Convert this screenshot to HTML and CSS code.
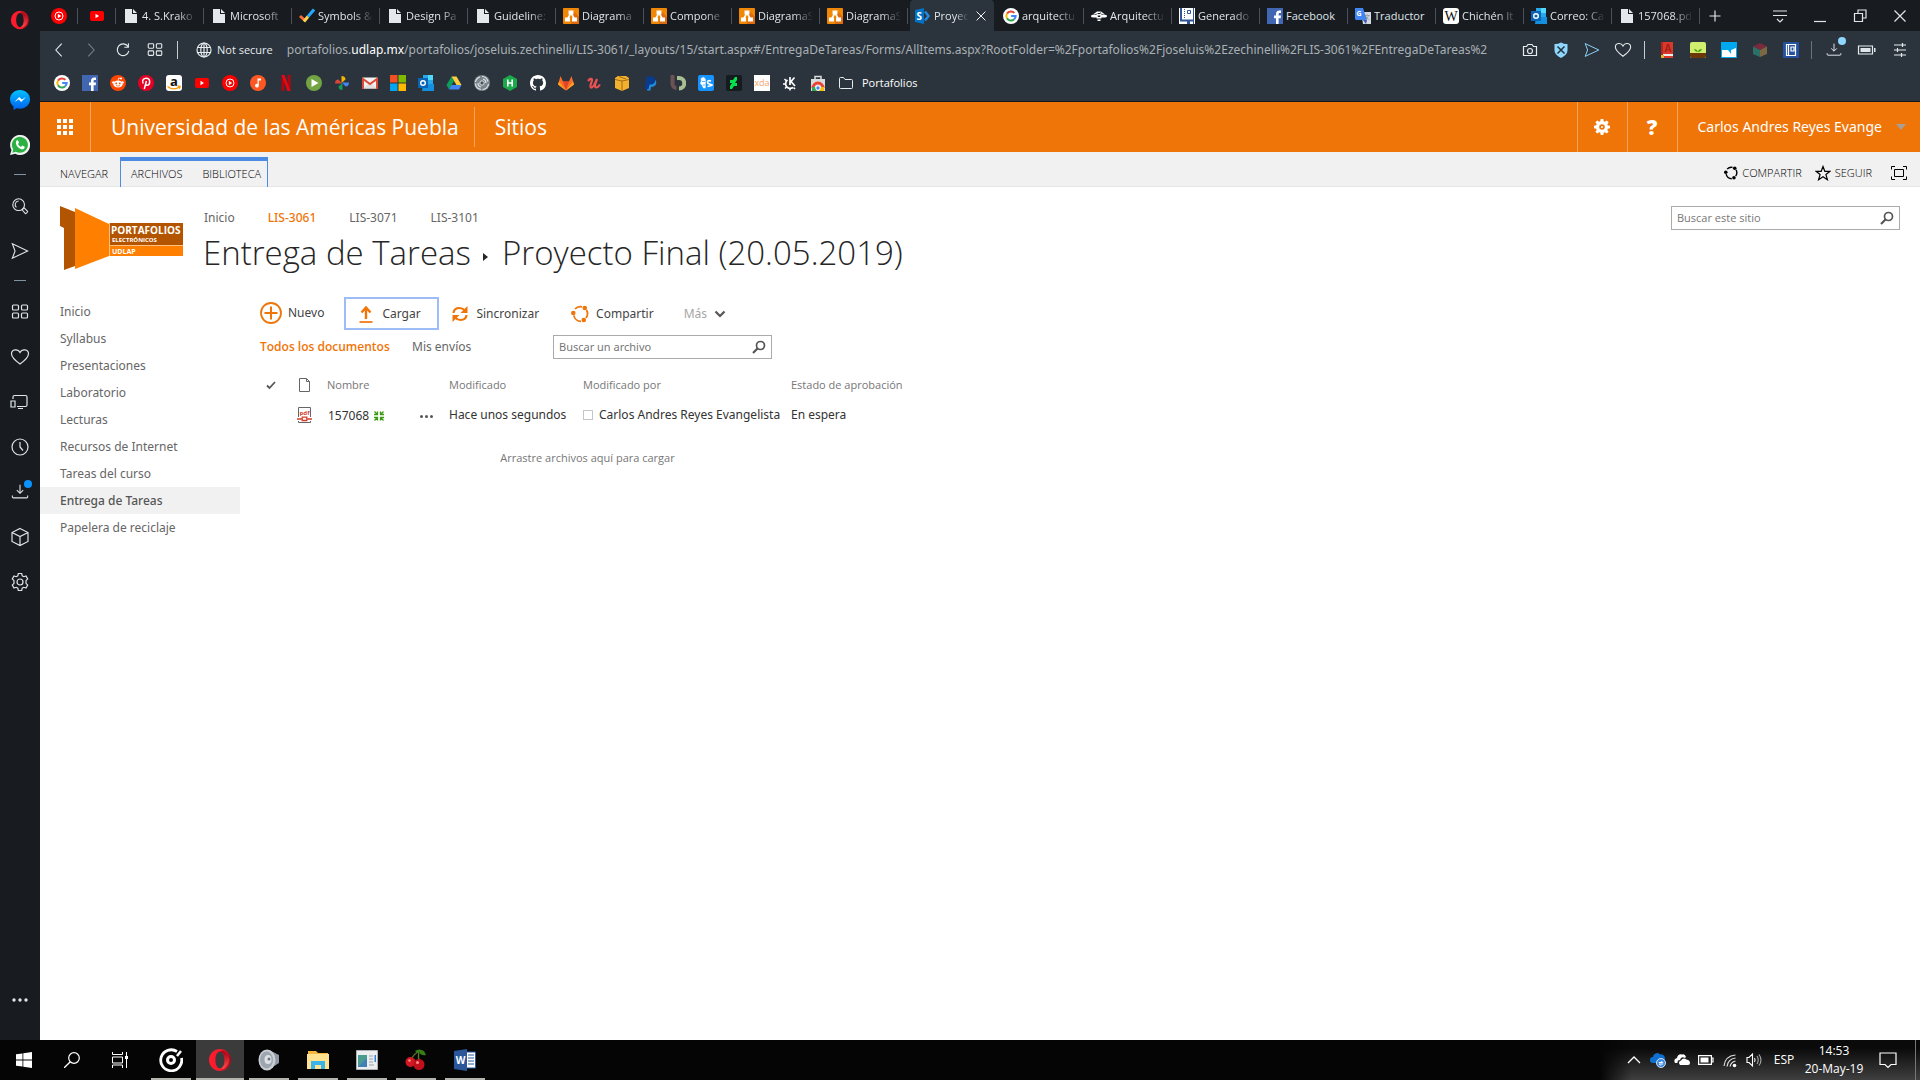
FILE: index.html
```html
<!DOCTYPE html>
<html lang="es">
<head>
<meta charset="utf-8">
<title>Entrega de Tareas - Proyecto Final (20.05.2019)</title>
<link rel="stylesheet" href="styles.css">
</head>
<body>
<svg class="gradients" aria-hidden="true">
  <defs>
    <linearGradient id="opera-ring" x1="0" y1="0" x2="1" y2="0"><stop offset="0" stop-color="#ff1b2d"/><stop offset=".5" stop-color="#f51b2c"/><stop offset="1" stop-color="#a20b1c"/></linearGradient>
    <linearGradient id="opera-side" x1="0" y1="0" x2="0" y2="1"><stop offset="0" stop-color="#a70014"/><stop offset="1" stop-color="#ff4b4b"/></linearGradient>
    <linearGradient id="msg-fill" x1="0" y1="0" x2="0" y2="1"><stop offset="0" stop-color="#00c0ff"/><stop offset="1" stop-color="#0060f0"/></linearGradient>
  </defs>
</svg>
<svg class="sprite" aria-hidden="true">
  <symbol id="google" viewBox="0 0 16 16"><circle cx="8" cy="8" r="8" fill="#fff"/><g fill="none" stroke-width="2"><path d="M11.4 4.9A4.7 4.7 0 0 0 4 5.6" stroke="#ea4335"/><path d="M4 5.6a4.7 4.7 0 0 0 0 4.8" stroke="#fbbc05"/><path d="M4 10.4a4.7 4.7 0 0 0 7.2.8" stroke="#34a853"/><path d="M11.2 11.2A4.6 4.6 0 0 0 12.7 8H8.2" stroke="#4285f4"/></g></symbol>
  <symbol id="facebook" viewBox="0 0 16 16"><path fill="#4267b2" d="M0 0h16v16H0z"/><path fill="#fff" d="M9 16v-5.800H7V7.600h2V6c0-2.200 1.200-3.400 3.200-3.400h1.800V5h-1.300c-.9 0-1.100.4-1.100 1.200v1.400H14l-.3 2.600h-2.100V16z"/></symbol>
  <symbol id="youtube" viewBox="0 0 16 16"><rect x="1" y="3" width="14" height="10" rx="2" fill="#f00"/><path fill="#fff" d="M6.500 5.800 10 8l-3.500 2.200z"/></symbol>
  <symbol id="ytmusic" viewBox="0 0 16 16"><circle cx="8" cy="8" r="8" fill="#f00"/><circle cx="8" cy="8" r="4" fill="none" stroke="#fff"/><path fill="#fff" d="M6.800 5.800 10.200 8l-3.400 2.200z"/></symbol>
  <symbol id="file" viewBox="0 0 16 16"><path fill="#e4e8ea" d="M2 1h7v5h5v9H2z"/><path fill="#e4e8ea" d="m10 1 4 4h-4z"/></symbol>
  <symbol id="tick" viewBox="0 0 16 16"><path fill="none" stroke="#ff6a3d" stroke-width="3" d="m1 8 5 4.500"/><path fill="none" stroke="#ffd34d" stroke-width="3" d="m5 13.500 4-5"/><path fill="none" stroke="#24a8ff" stroke-width="3" d="m9 8.500 6-7"/></symbol>
  <symbol id="diagram" viewBox="0 0 16 16"><rect width="16" height="16" rx="1" fill="#f08705"/><path fill="#df6c0c" d="M10 3l6 6v7H8z"/><path d="M8 5 4.500 11M8 5l3.500 6" stroke="#fff" stroke-width="1.500"/><path fill="#fff" d="M5.500 2.500h5v4h-5zM2 9.500h5v4H2zM9 9.500h5v4H9z"/></symbol>
  <symbol id="sharepoint" viewBox="0 0 16 16"><path fill="#0072c6" d="M0 2 9 0v16l-9-2z"/><path fill="none" stroke="#1e8ae0" stroke-width="2.500" d="m10 3.500 3.500 4.500L10 12.500"/><text x="1.500" y="12" class="glyph-bold" fill="#fff" font-size="10">S</text></symbol>
  <symbol id="bee" viewBox="0 0 16 16"><g fill="#fff"><ellipse cx="3.500" cy="8" rx="3.500" ry="1.600"/><ellipse cx="12.500" cy="8" rx="3.500" ry="1.600"/><path d="m2 6.500 4-3 1 2zM14 6.500l-4-3-1 2zM6 3.500h4V5H6zM5.500 6h5v1.500h-5zM5.500 9h5v1.500h-5zM6.500 11.500h3V13h-3z"/></g></symbol>
  <symbol id="notebook" viewBox="0 0 16 16"><path fill="#fff" d="M0 0h16v16H0z"/><path fill="none" stroke="#2f5597" stroke-width="2" d="M2 0v12.500h13"/><path fill="none" stroke="#2f5597" stroke-dasharray="1 1" d="M5.500 1v10"/><path fill="none" stroke="#2f5597" d="M14.500 0v16M8.500 2.500h3v3h-3z"/><path fill="#2f5597" d="M8 12h3v4H8z"/></symbol>
  <symbol id="translate" viewBox="0 0 16 16"><path fill="#d5d9df" d="M6 4h10v12H8z"/><path fill="#4285f4" d="M0 0h8l4 12H1L0 11z"/><path fill="#3a5bb8" d="m8 12 3 4 1-4z"/><text x="1.500" y="8" class="glyph-bold" fill="#fff" font-size="7">G</text><text x="9" y="11" fill="#7b828d" font-size="6" font-family="Noto Sans CJK SC, sans-serif">文</text></symbol>
  <symbol id="wikipedia" viewBox="0 0 16 16"><rect width="16" height="16" rx="3" fill="#fff"/><text x="8" y="13" text-anchor="middle" font-size="14" font-family="Liberation Serif, serif" fill="#111">W</text></symbol>
  <symbol id="outlook" viewBox="0 0 16 16"><path fill="#28a8ea" d="M5 0h10v10H5z"/><path fill="#50d9ff" d="M10 0h5v5h-5z"/><path fill="#1490df" d="M5 9h11v7H4z"/><path fill="#0a64b5" d="M0 3h10v10H0z"/><circle cx="5" cy="8" r="2.300" fill="none" stroke="#fff" stroke-width="1.400"/></symbol>
  <symbol id="reddit" viewBox="0 0 16 16"><circle cx="8" cy="8" r="8" fill="#ff4500"/><ellipse cx="8" cy="9" rx="4.800" ry="3.500" fill="#fff"/><circle cx="3.400" cy="7.400" r="1.200" fill="#fff"/><circle cx="12.600" cy="7.400" r="1.200" fill="#fff"/><circle cx="11" cy="3.500" r="1" fill="#fff"/><path d="m8 5.500.7-2.500 2 .5" fill="none" stroke="#fff" stroke-width=".8"/><circle cx="6.200" cy="8.400" r=".9" fill="#ff4500"/><circle cx="9.800" cy="8.400" r=".9" fill="#ff4500"/><path d="M6 10.500q2 1.300 4 0" fill="none" stroke="#ff4500" stroke-width=".7"/></symbol>
  <symbol id="pinterest" viewBox="0 0 16 16"><circle cx="8" cy="8" r="8" fill="#e60023"/><path d="M5.200 8.600C3.500 5.500 5.500 3.200 8.300 3.200c4.700 0 4 7.100.6 7.100-1 0-1.500-.8-1.500-.8M8.400 6 6.300 14" fill="none" stroke="#fff" stroke-width="1.500"/></symbol>
  <symbol id="amazon" viewBox="0 0 16 16"><rect width="16" height="16" rx="3" fill="#fff"/><text x="8" y="10.500" text-anchor="middle" class="glyph-bold" font-size="13" fill="#111">a</text><path d="M1.500 11.500q6 4.500 12 .5M11.500 11l2.600.4-.7 2.400" fill="none" stroke="#f90" stroke-width="1.300"/></symbol>
  <symbol id="music-note" viewBox="0 0 16 16"><circle cx="8" cy="8" r="8" fill="#ff5722"/><path fill="#fff" d="M7.500 3.500H11v2H8.800v5.200a1.900 1.900 0 1 1-1.300-1.800z"/></symbol>
  <symbol id="netflix" viewBox="0 0 16 16"><path fill="#b1060f" d="M3.500 0h3v16l-3 .300zM9.500 0h3v16.300l-3-.300z"/><path fill="#e50914" d="M3.500 0h3l6 16.300-3-.300z"/></symbol>
  <symbol id="play-green" viewBox="0 0 16 16"><circle cx="8" cy="8" r="8" fill="#73a443"/><path fill="#fff" d="m5.500 4 7 4-7 4z"/></symbol>
  <symbol id="photos" viewBox="0 0 16 16"><path fill="#f4b400" d="M7.500 8V1q4 0 4 3.500z"/><path fill="#4285f4" d="M8 7.500h7q0 4-3.500 4z"/><path fill="#0f9d58" d="M8.500 8v7q-4 0-4-3.500z"/><path fill="#db4437" d="M8 8.500H1q0-4 3.500-4z"/></symbol>
  <symbol id="gmail" viewBox="0 0 16 16"><path fill="#f2f2f2" d="M1 2.500h14v11H1z"/><path fill="#e0e0e0" d="m1 13.500 7-6 7 6z"/><path d="M1 14V4l7 5 7-5v10" fill="none" stroke="#dd4b39" stroke-width="2"/></symbol>
  <symbol id="microsoft" viewBox="0 0 16 16"><path fill="#f25022" d="M0 0h7.500v7.500H0z"/><path fill="#7fba00" d="M8.500 0H16v7.500H8.500z"/><path fill="#00a4ef" d="M0 8.500h7.500V16H0z"/><path fill="#ffb900" d="M8.500 8.500H16V16H8.500z"/></symbol>
  <symbol id="drive" viewBox="0 0 16 16"><path fill="#0f9d58" d="M5.500 1.500 8 6l-5 8.500L.500 10z"/><path fill="#ffcd40" d="M5.500 1.500h5l5 8.500h-5z"/><path fill="#4285f4" d="M5.500 10h10L13 14.500H3z"/></symbol>
  <symbol id="swirl" viewBox="0 0 16 16"><circle cx="8" cy="8" r="8" fill="#79838a"/><path d="M8 1.500a6.500 6.500 0 0 1 6 5M14.500 9a6.500 6.500 0 0 1-6 5.500M7 14.500a6.500 6.500 0 0 1-5.500-6M1.500 7A6.500 6.500 0 0 1 6 2M9 4a4 4 0 0 1 3 4M7 12a4 4 0 0 1-3-4" fill="none" stroke="#dfe3e5" stroke-width="1.200"/><circle cx="8" cy="8" r="2.200" fill="#4a545a" stroke="#dfe3e5"/></symbol>
  <symbol id="hackerrank" viewBox="0 0 16 16"><path fill="#1ba94c" d="m8 0 7 4v8l-7 4-7-4V4z"/><path d="M5.800 4.500v7M10.200 4.500v7M5.800 8h4.400" stroke="#fff" stroke-width="1.600"/></symbol>
  <symbol id="github" viewBox="0 0 16 16"><path fill="#fff" d="M8 0C3.580 0 0 3.580 0 8c0 3.540 2.290 6.530 5.470 7.590.4.070.55-.17.55-.38 0-.19-.01-.82-.01-1.490-2.010.37-2.530-.49-2.690-.94-.09-.23-.48-.94-.82-1.130-.28-.15-.68-.52-.01-.53.63-.01 1.080.58 1.230.82.72 1.210 1.870.87 2.330.66.07-.52.28-.87.51-1.070-1.780-.2-3.640-.89-3.640-3.950 0-.87.310-1.590.82-2.150-.08-.2-.36-1.020.08-2.120 0 0 .67-.21 2.200.82.64-.18 1.320-.27 2-.27s1.360.09 2 .27c1.530-1.040 2.200-.82 2.200-.82.44 1.100.16 1.920.08 2.120.51.56.82 1.270.82 2.150 0 3.070-1.870 3.750-3.650 3.950.29.25.54.73.54 1.480 0 1.070-.01 1.930-.01 2.200 0 .21.15.46.55.38A8 8 0 0 0 16 8c0-4.420-3.580-8-8-8z"/></symbol>
  <symbol id="gitlab" viewBox="0 0 16 16"><path fill="#fc6d26" d="M0 9.500 2.500 1 5 6.500h6L13.500 1 16 9.500l-8 6z"/><path fill="#e24329" d="m5 6.500 3 9 3-9z"/><path fill="#fca326" d="M0 9.500 1 6.500 8 15.500zM16 9.500l-1-3-7 9z"/></symbol>
  <symbol id="udemy" viewBox="0 0 16 16"><path d="M2 6q3-3.500 4-1.500C6.500 6 3 11.500 5 12.500c2 .8 4.500-5 6-8.500-1.500 4-3 8-1 8.500 1.500.2 3-1.500 4-3" fill="none" stroke="#ec5252" stroke-width="2.200"/></symbol>
  <symbol id="aws" viewBox="0 0 16 16"><path fill="#f2b02f" d="m1 3 3-2h8l3 2v10l-7 3-7-3z"/><path d="M1 4.500 8 6l7-1.500M8 6v10M5 1.500l7 2.500" fill="none" stroke="#9a6410" stroke-width=".9"/></symbol>
  <symbol id="paypal" viewBox="0 0 16 16"><path fill="#1f8ddd" d="M7 5h6.500c2 3 0 7-4 7H9l-.6 3.500H5z"/><path fill="#0a3a8c" d="M4.500 1.500h6C15 2 14 9.500 9 9.500H7.500l-1 4.500H2.500z"/></symbol>
  <symbol id="brackets" viewBox="0 0 16 16"><path d="M2.500 0v9a4 4 0 0 0 4 4" fill="none" stroke="#6b5257" stroke-width="4"/><path d="M7 3h2a5 5 0 0 1 0 10.500" fill="none" stroke="#a9bf93" stroke-width="4"/></symbol>
  <symbol id="blue-brain" viewBox="0 0 16 16"><rect width="16" height="16" rx="2" fill="#1593ff"/><path d="M7 3a2.500 2.500 0 0 0-4 3 2.500 2.500 0 0 0 1 4.500A2.500 2.500 0 0 0 8 13V4zM4 6.500h3M5 10h2" fill="#fff" stroke="#1593ff" stroke-width=".7"/><path d="M13 6q-3.500-1-3.500 1T13 9.500t-3.500 2" fill="none" stroke="#fff" stroke-width="1.600"/></symbol>
  <symbol id="deviant" viewBox="0 0 16 16"><rect width="16" height="16" rx="2" fill="#151b1e"/><path fill="#05e04b" d="M11 2v3L9 8h2v3H8l-2 3H4v-3l2-3H4V5h3l2-3z"/></symbol>
  <symbol id="xda" viewBox="0 0 16 16"><path fill="#fff" d="M0 0h16v16H0z"/><text x="8" y="11" text-anchor="middle" font-size="9" font-family="Open Sans, sans-serif" fill="#f3a56e">xda</text></symbol>
  <symbol id="kde" viewBox="0 0 16 16"><path d="M8 2v8M12.500 2.500 9 6.500l4 4.500" fill="none" stroke="#fff" stroke-width="1.700"/><path d="M5.500 5a4.200 4.200 0 0 0 5.500 7.500" fill="none" stroke="#fff" stroke-width="1.700"/><path d="m2.500 4 2 2M1 9h3M3 13.500l1.800-1.800M8 15.500V13M13 14l-1.500-1.500" stroke="#fff" stroke-width="1.500"/></symbol>
  <symbol id="webstore" viewBox="0 0 16 16"><path fill="#d9dcdd" d="M1 4h14v12H1z"/><path d="M5 4V1.500h6V4" fill="none" stroke="#d9dcdd" stroke-width="1.500"/><path d="M3 13a5 5 0 0 1 10 0" fill="none" stroke="#ea4335" stroke-width="3"/><path fill="#34a853" d="M2 12h3l2 4H2z"/><path fill="#fbbc05" d="M11 12h3v4H9z"/><circle cx="8" cy="13" r="2.200" fill="#4285f4" stroke="#fff"/></symbol>
  <symbol id="folder" viewBox="0 0 16 16"><path d="M1.500 3.500q0-1 1-1h3l1.500 2h6.500q1 0 1 1v7q0 1-1 1h-11q-1 0-1-1z" fill="none" stroke="#e6ebee"/></symbol>
  <symbol id="opera" viewBox="0 0 24 24"><path fill="url(#opera-ring)" fill-rule="evenodd" d="M12 1a11 11 0 1 0 0 22 11 11 0 0 0 0-22zm0 2.500c2.800 0 4.600 3.800 4.600 8.500s-1.800 8.500-4.600 8.500S7.400 16.700 7.400 12 9.200 3.500 12 3.500z"/><path fill="url(#opera-side)" d="M12 3.500c2-.8 4-.5 6 1.500 5 5 4 10 0 14-2 1.800-4 2.300-6 1.500 2.800 0 4.600-3.800 4.600-8.500S14.800 3.500 12 3.500z"/></symbol>
  <symbol id="messenger" viewBox="0 0 20 20"><path fill="url(#msg-fill)" d="M10 0C4.400 0 0 4 0 9.300c0 3 1.400 5.500 3.500 7.200V20l3.200-1.800c1 .300 2.100.500 3.300.500 5.600 0 10-4.100 10-9.400S15.600 0 10 0z"/><path fill="#fff" d="m4.500 12 4.700-5 2.600 2.500L16 7l-4.800 5-2.500-2.500z"/></symbol>
  <symbol id="whatsapp" viewBox="0 0 20 20"><path fill="#f1f5f1" d="m0 20 1.500-5A10 10 0 1 1 5.300 18.700z"/><path fill="#2bb041" d="m2.300 17.800 1-3.400a8 8 0 1 1 2.600 2.400z"/><path fill="#fff" d="M6.500 5.500 8 5.300l1 2.400-1 1.200q1 2 3 3l1.200-1.300 2.500 1.200c0 2-1.500 2.700-3 2.500C8 13.500 4.500 9 6.500 5.500z"/></symbol>
  <symbol id="lens-side" viewBox="0 0 20 20"><g class="line"><circle cx="8.500" cy="8.500" r="6.500"/><path d="M8.500 4.500a4 4 0 0 0-2.500 7M13.500 13l1-1 4 4q-.5 2-2.500 2.500l-3.500-4z"/></g></symbol>
  <symbol id="send" viewBox="0 0 20 20"><path class="line" d="m1.500 2 17 8-17 8 3-8z"/></symbol>
  <symbol id="tiles" viewBox="0 0 20 20"><g class="line"><rect x="2.500" y="3" width="6" height="5" rx="1"/><rect x="11.500" y="3" width="6" height="5" rx="1"/><rect x="2.500" y="11" width="6" height="5" rx="1"/><rect x="11.500" y="11" width="6" height="5" rx="1"/></g></symbol>
  <symbol id="heart" viewBox="0 0 20 20"><path class="line" d="M10 17Q1.500 11 1.500 6.800C1.500 2 8 1.500 10 5.500 12 1.500 18.500 2 18.500 6.800 18.500 11 10 17 10 17z"/></symbol>
  <symbol id="devices" viewBox="0 0 20 20"><path class="line" d="M3 7V5q0-1.500 1.500-1.500h11Q17 3.500 17 5v8q0 1.500-1.500 1.500H7M1 9h4v6H1zM8 16.500h5"/></symbol>
  <symbol id="clock" viewBox="0 0 20 20"><g class="line"><circle cx="10" cy="10" r="8"/><path d="M10 5v5l3 3.500"/></g></symbol>
  <symbol id="download" viewBox="0 0 20 20"><path class="line" d="M10 2v9M6.500 8l3.500 3.500L13.500 8M1.500 14v1.500q0 1 1 1h15q1 0 1-1V14"/></symbol>
  <symbol id="cube" viewBox="0 0 20 20"><path class="line" d="m10 1.500 8 4v9l-8 4-8-4v-9zM2 5.500l8 4 8-4M10 9.500v9"/></symbol>
  <symbol id="gear-side" viewBox="0 0 20 20"><g class="line"><path d="M8.300 1.500h3.400l.5 2.300 1.600.9 2.200-.7 1.700 3L16 8.700v2.600l1.700 1.700-1.700 3-2.200-.7-1.600.9-.5 2.300H8.300l-.5-2.300-1.600-.9-2.200.7-1.700-3L4 11.300V8.700L2.300 7 4 4l2.200.7 1.600-.9z"/><circle cx="10" cy="10" r="3"/></g></symbol>
  <symbol id="dots" viewBox="0 0 20 20"><g fill="#dfe5e8"><circle cx="4" cy="10" r="1.700"/><circle cx="10" cy="10" r="1.700"/><circle cx="16" cy="10" r="1.700"/></g></symbol>
  <symbol id="back" viewBox="0 0 20 20"><path class="line" d="M13 3 6.500 10l6.500 7"/></symbol>
  <symbol id="forward" viewBox="0 0 20 20"><path class="line" d="m7 3 6.500 7L7 17"/></symbol>
  <symbol id="reload" viewBox="0 0 20 20"><path class="line" d="M15.500 6A6.500 6.500 0 1 0 16.500 11M16 2.500V7h-4.500"/></symbol>
  <symbol id="globe" viewBox="0 0 20 20"><g class="line"><circle cx="10" cy="10" r="7"/><ellipse cx="10" cy="10" rx="3.200" ry="7"/><path d="M3.500 7.500h13M3.500 12.500h13M10 3v14"/></g></symbol>
  <symbol id="camera" viewBox="0 0 20 20"><g class="line"><path d="M3.500 6.500h3l1.500-2h4l1.500 2h3v9h-13z"/><circle cx="10" cy="11" r="2.500"/></g></symbol>
  <symbol id="shield" viewBox="0 0 20 20"><path fill="#8fd6ff" d="M10 2.500q4 2 6.500 1.500v6.500q0 4-6.500 7.500-6.500-3.500-6.500-7.500V4Q6 4.500 10 2.500z"/><path d="m6.500 6.500 7 7m0-7-7 7" stroke="#23303a" stroke-width="1.500"/></symbol>
  <symbol id="book" viewBox="0 0 16 16"><path fill="#d9392b" d="M2 0h12v16H2z"/><path fill="#eee" d="M3 12h11v2H3z"/><path fill="#b5271d" d="M2 0h2v13H2z"/><path fill="#e5b32b" d="M2 13h3v3H2z"/><text x="9" y="10" text-anchor="middle" class="glyph-bold" font-size="10" fill="#a52016">A</text></symbol>
  <symbol id="sprout" viewBox="0 0 16 16"><rect width="16" height="16" rx="2" fill="#d2ee6f"/><path fill="#6b3708" d="M0 11h16v3q0 2-2 2H2q-2 0-2-2z"/><path fill="#4f9d16" d="M8 10Q7 7 4 7q1 3 4 3 0-3 4-3-1 3-4 3z"/></symbol>
  <symbol id="wave" viewBox="0 0 16 16"><path fill="#00a8f0" d="M0 0h16v16H0z"/><path fill="#fff" d="M1 8h6l3 4V8l5-2v9H1z"/></symbol>
  <symbol id="rgb-cube" viewBox="0 0 16 16"><path fill="#7b2a3b" d="m8 1 7 3.500L8 8 1 4.500z"/><path fill="#2d7068" d="m1 4.500 7 3.500v7L1 12z"/><path fill="#7a6743" d="M15 4.500 8 8v7l7-3z"/></symbol>
  <symbol id="journal" viewBox="0 0 16 16"><rect width="16" height="16" rx="1" fill="#2552a0"/><path d="M3.500 2.500h9v11h-9zM5.500 2v11M8 5h3v4H8z" fill="none" stroke="#fff" stroke-width="1.200"/></symbol>
  <symbol id="battery" viewBox="0 0 20 20"><path class="line" d="M1.500 6h14v8h-14z"/><path fill="#dfe5e8" d="M3.500 8h10v4h-10zM17 8h1.500v4H17z"/></symbol>
  <symbol id="sliders" viewBox="0 0 20 20"><path class="line" d="M4 5h12M4 10h12M4 15h12M12.500 3v4M7.500 8v4M11.500 13v4"/></symbol>
  <symbol id="tab-menu" viewBox="0 0 20 20"><path class="line" d="M3 5h14M3 9.500h14M7 13l3 3 3-3"/></symbol>
  <symbol id="plus" viewBox="0 0 20 20"><path class="line" d="M10 4.500v11M4.500 10h11"/></symbol>
  <symbol id="minus" viewBox="0 0 20 20"><path class="line" d="M4 15.500h12"/></symbol>
  <symbol id="restore" viewBox="0 0 20 20"><path class="line" d="M4.500 7.500h8v8h-8zM8 7V4h8v8h-3"/></symbol>
  <symbol id="close" viewBox="0 0 20 20"><path class="line" d="m4.500 4.500 11 11m0-11-11 11"/></symbol>
  <symbol id="cog" viewBox="0 0 16 16"><path fill="currentColor" fill-rule="evenodd" d="M6.700 0h2.600l.4 2.200 1.200.5 1.900-1.200 1.800 1.800-1.200 1.900.4 1.200 2.200.4v2.500l-2.200.4-.5 1.200 1.300 1.900-1.800 1.800-1.900-1.300-1.200.5L9.300 16H6.700l-.4-2.200-1.200-.5-1.900 1.300-1.800-1.800 1.300-1.900-.5-1.200L0 9.300V6.700l2.200-.4.5-1.200-1.300-1.900 1.800-1.800 1.900 1.300 1.200-.5zM8 5.200a2.800 2.800 0 1 0 0 5.600 2.800 2.800 0 0 0 0-5.600z"/><circle cx="8" cy="8" r="1" fill="currentColor"/></symbol>
  <symbol id="share" viewBox="0 0 18 18"><g fill="none" stroke="currentColor" stroke-width="1.800"><path d="M4 4a7.500 7.500 0 0 1 7-2.200M15.500 5a7.500 7.500 0 0 1-.5 8M10 16.400a7.500 7.500 0 0 1-7.200-6"/></g><circle cx="13.800" cy="3" r="2.300" fill="currentColor"/><circle cx="2.300" cy="8" r="2.300" fill="currentColor"/><circle cx="12.800" cy="15" r="2.300" fill="currentColor"/></symbol>
  <symbol id="star" viewBox="0 0 16 16"><path fill="none" stroke="currentColor" stroke-width="1.200" d="m8 1.500 1.800 4.800h5.200l-4.100 3.200 1.500 5.200L8 11.700l-4.400 3 1.500-5.200L1 6.300h5.200z"/></symbol>
  <symbol id="focus" viewBox="0 0 16 16"><path fill="none" stroke="currentColor" stroke-width="1" d="M3.500 4.500h9v7h-9zM.5 4.500v-3H4M12 1.500h3.500v3M15.500 11.500v3H12M4 14.500H.5v-3"/></symbol>
  <symbol id="magnifier" viewBox="0 0 14 14"><circle cx="8.500" cy="5.500" r="4" fill="none" stroke="currentColor" stroke-width="1.700"/><path d="M5.500 8.500 1 13" stroke="currentColor" stroke-width="2.200"/></symbol>
  <symbol id="add-circle" viewBox="0 0 22 22"><circle cx="11" cy="11" r="10" fill="none" stroke="currentColor" stroke-width="1.800"/><path d="M11 4.500v13M4.500 11h13" stroke="currentColor" stroke-width="2"/></symbol>
  <symbol id="upload" viewBox="0 0 18 18"><path fill="none" stroke="currentColor" stroke-width="2.400" d="M9 14V3M4.500 7.500 9 2.500l4.500 5"/><path stroke="currentColor" stroke-width="1.700" d="M2.500 17h13"/></symbol>
  <symbol id="sync" viewBox="0 0 18 18"><path fill="none" stroke="currentColor" stroke-width="2.200" d="M2.500 8Q3 3 8.500 3q3 0 5.500 2.500M15.500 10q-.5 5-6 5-3 0-5.500-2.500"/><path fill="currentColor" d="M16.500 1v7h-7zM1.500 17v-7h7z"/></symbol>
  <symbol id="chevron" viewBox="0 0 12 12"><path fill="none" stroke="#555" stroke-width="2.200" d="m1.500 3.500 4.500 4.500 4.500-4.500"/></symbol>
  <symbol id="check" viewBox="0 0 10 10"><path fill="none" stroke="#555" stroke-width="1.800" d="m1 5.500 2.500 2.500L9 2"/></symbol>
  <symbol id="page" viewBox="0 0 16 16"><path fill="none" stroke="#666" d="M2.500 1.500h7l3 3v10h-10zM9.500 1.500v3h3"/></symbol>
  <symbol id="pdf" viewBox="0 0 16 16"><path fill="none" stroke="#666" d="M1.500 10V.500h12V10M1.500 14v1.500h12V14"/><text x="7.500" y="7.500" text-anchor="middle" class="glyph-bold" font-size="6" fill="#d2402c">pdf</text><path fill="none" stroke="#d2402c" stroke-width="1.300" d="M0 12h4.500m6 0H15M5.200 10.200h4.600v3.300H5.200z"/></symbol>
  <symbol id="new-item" viewBox="0 0 10 10"><path fill="none" stroke="#3c9a13" stroke-width="1.300" d="M.5.5l3 3M9.500.5l-3 3M.5 9.500l3-3M9.500 9.500l-3-3M0 3.500h3.500V.5M10 3.500H6.500V.5M0 6.500h3.500v3M10 6.500H6.500v3"/></symbol>
  <symbol id="windows" viewBox="0 0 16 16"><path fill="#fff" d="m0 2.300 6.500-.9v6.200H0zM7.300 1.300 16 0v7.600H7.300zM0 8.400h6.500v6.200L0 13.700zM7.300 8.400H16V16l-8.700-1.300z"/></symbol>
  <symbol id="task-search" viewBox="0 0 16 16"><circle cx="10" cy="6" r="5.300" fill="none" stroke="#fff" stroke-width="1.200"/><path d="M6.300 9.700 0 16" stroke="#fff" stroke-width="1.300"/></symbol>
  <symbol id="task-view" viewBox="0 0 16 16"><path fill="none" stroke="#fff" d="M.500 0v2.500h10V0M.500 16v-3h10v3M.500 5h10v6H.500zM14.500 0v4M14.500 7v9"/><path fill="#fff" d="M13 4h3v3h-3z"/></symbol>
  <symbol id="groove" viewBox="0 0 24 24"><path d="M18 3.500A10.500 10.500 0 1 0 22.500 10" fill="none" stroke="#fff" stroke-width="2.800"/><circle cx="12" cy="12" r="3.500" fill="none" stroke="#fff" stroke-width="3"/><path d="m18 8 4-5" stroke="#fff" stroke-width="2.500"/></symbol>
  <symbol id="speaker" viewBox="0 0 22 22"><path fill="#8f99a3" d="M11 1l10 5v8l-11 7z"/><ellipse cx="9" cy="11" rx="8.500" ry="10.500" fill="#c9ced4"/><ellipse cx="8.500" cy="11" rx="6.500" ry="8.500" fill="#9da5ae"/><ellipse cx="10" cy="10.500" rx="3.500" ry="4.500" fill="#dde1e5"/><circle cx="11" cy="10" r="1.500" fill="#68717a"/></symbol>
  <symbol id="explorer" viewBox="0 0 22 20"><path fill="#f5b83d" d="M1 1h8l2 2h10v6H1z"/><path fill="#ffe28f" d="M0 4h22v15H0z"/><path fill="#39b3e8" d="M4 19v-8h14v8h-4v-4H8v4z"/></symbol>
  <symbol id="control-panel" viewBox="0 0 22 20"><path fill="#eceef0" stroke="#aab0b5" d="M.500.500h21v19H.500z"/><path fill="#4b9b8e" d="M2 5h9v12H2z"/><path fill="#427fb8" d="m2 17 9-9v9z"/><path d="M13 6h4M13 9h4M13 12h4M13 15h5" stroke="#9aa3aa"/><path fill="#2d86d8" d="M18.500 5h1.500v7h-1.500z"/></symbol>
  <symbol id="cherry" viewBox="0 0 22 22"><path d="M6 10Q9 5 14 2q-1 6 0 9" fill="none" stroke="#5a7a22" stroke-width="1.400"/><path fill="#347d19" d="M10 2q4-3 9 0l2 4q-5 1-7-3-2 2-4-1z"/><circle cx="5.500" cy="13" r="5" fill="#d11822"/><circle cx="14" cy="15.500" r="5.500" fill="#c0101b"/><circle cx="4.500" cy="11.500" r="1.300" fill="#ff8a8a"/><circle cx="12.500" cy="13.500" r="1.500" fill="#ff8a8a"/></symbol>
  <symbol id="word" viewBox="0 0 22 22"><path fill="#fff" stroke="#2b579a" d="M12 3h9.500v16H12z"/><path d="M14 6h6M14 9h6M14 12h6M14 15h6" stroke="#2b579a"/><path fill="#2b579a" d="m0 2 13-2v22L0 20z"/><text x="6.500" y="15" text-anchor="middle" class="glyph-bold" font-size="10" fill="#fff">W</text></symbol>
  <symbol id="tray-up" viewBox="0 0 16 16"><path fill="none" stroke="#fff" stroke-width="1.300" d="m2 11 6-6 6 6"/></symbol>
  <symbol id="onedrive-sync" viewBox="0 0 16 16"><path fill="#0f6fd0" d="M3 11a3 3 0 0 1 0-6 4 4 0 0 1 7-2.500 4 4 0 0 1 5 4V11z"/><circle cx="11" cy="11" r="4.500" fill="#3a86e0" stroke="#fff" stroke-width=".8"/><path d="M8.800 10.500h4l-1.500-1.500M13.200 12h-4l1.500 1.500" fill="none" stroke="#fff"/></symbol>
  <symbol id="onedrive" viewBox="0 0 16 16"><path fill="#fff" d="M1 11Q-1 7 3 6q1-4.500 5-3.500 3-1 4 2.500l-1 1Q7 4 6 8q-3 0-2.500 3z"/><path fill="#fff" d="M6 13q-2.500-3 1-4.500Q9 5 12.500 7.500 16 8 16 11q0 2-2 2z"/></symbol>
  <symbol id="tray-battery" viewBox="0 0 16 16"><path fill="none" stroke="#fff" stroke-width="1.200" d="M.600 3.600h12.800v8.800H.600zM13.500 6H15v4h-1.500"/><path fill="#fff" d="M2.500 5.500h8v5h-8z"/></symbol>
  <symbol id="wifi" viewBox="0 0 16 16"><g fill="none" stroke="#ddd" stroke-width="1.200"><path d="M2 14Q3 4 13.500 3M5 14.500Q6 7 13.500 6M8 14.500Q9 10 13.500 9"/></g><circle cx="12.500" cy="13.500" r="1.800" fill="#fff"/></symbol>
  <symbol id="volume" viewBox="0 0 16 16"><path fill="none" stroke="#fff" stroke-width="1.100" d="M1 5.500h2L6.500 2v12L3 10.500H1zM8.500 6q1.200 2 0 4"/><path fill="none" stroke="#aaa" stroke-width="1.100" d="M11 4q2.500 4 0 8M13 2.500q4 5.500 0 11"/></symbol>
  <symbol id="action-center" viewBox="0 0 18 18"><path fill="none" stroke="#fff" stroke-width="1.200" d="M1 2h16v11.500h-5L9 16.500l-3-3H1z"/></symbol>
  <symbol id="waffle" viewBox="0 0 16 16"><path fill="#fff" d="M0 0h4v4H0zM6 0h4v4H6zM12 0h4v4h-4zM0 6h4v4H0zM6 6h4v4H6zM12 6h4v4h-4zM0 12h4v4H0zM6 12h4v4H6zM12 12h4v4h-4z"/></symbol>
</svg>

<div class="desktop">
  <nav class="side-panel" aria-label="Opera">
    <button class="side-btn opera-menu" aria-label="Menú"><svg class="i20"><use href="#opera"/></svg></button>
    <button class="side-btn" aria-label="Messenger"><svg class="i20"><use href="#messenger"/></svg></button>
    <button class="side-btn" aria-label="WhatsApp"><svg class="i20"><use href="#whatsapp"/></svg></button>
    <div class="side-rule"></div>
    <button class="side-btn" aria-label="Buscar"><svg class="i18"><use href="#lens-side"/></svg></button>
    <button class="side-btn" aria-label="Flow"><svg class="i18"><use href="#send"/></svg></button>
    <div class="side-rule"></div>
    <button class="side-btn" aria-label="Acceso rápido"><svg class="i20"><use href="#tiles"/></svg></button>
    <button class="side-btn" aria-label="Favoritos"><svg class="i20"><use href="#heart"/></svg></button>
    <button class="side-btn" aria-label="Dispositivos"><svg class="i20"><use href="#devices"/></svg></button>
    <button class="side-btn" aria-label="Historial"><svg class="i20"><use href="#clock"/></svg></button>
    <button class="side-btn" aria-label="Descargas"><svg class="i18"><use href="#download"/></svg><span class="dot"></span></button>
    <button class="side-btn" aria-label="Extensiones"><svg class="i20"><use href="#cube"/></svg></button>
    <button class="side-btn" aria-label="Ajustes"><svg class="i20"><use href="#gear-side"/></svg></button>
    <button class="side-btn side-more" aria-label="Más"><svg class="i20"><use href="#dots"/></svg></button>
  </nav>

  <div class="window">
    <div class="tab-bar">
      <button class="tab pinned" aria-label="YouTube Music"><svg class="i16"><use href="#ytmusic"/></svg></button>
      <button class="tab pinned" aria-label="YouTube"><svg class="i16"><use href="#youtube"/></svg></button>
      <button class="tab"><svg class="i16"><use href="#file"/></svg><span class="tab-label">4. S.Krako</span></button>
      <button class="tab"><svg class="i16"><use href="#file"/></svg><span class="tab-label">Microsoft</span></button>
      <button class="tab"><svg class="i16"><use href="#tick"/></svg><span class="tab-label">Symbols &amp;</span></button>
      <button class="tab"><svg class="i16"><use href="#file"/></svg><span class="tab-label">Design Pa</span></button>
      <button class="tab"><svg class="i16"><use href="#file"/></svg><span class="tab-label">Guideline:</span></button>
      <button class="tab"><svg class="i16"><use href="#diagram"/></svg><span class="tab-label">Diagrama</span></button>
      <button class="tab"><svg class="i16"><use href="#diagram"/></svg><span class="tab-label">Compone</span></button>
      <button class="tab"><svg class="i16"><use href="#diagram"/></svg><span class="tab-label">DiagramaS</span></button>
      <button class="tab"><svg class="i16"><use href="#diagram"/></svg><span class="tab-label">DiagramaS</span></button>
      <button class="tab active"><svg class="i16"><use href="#sharepoint"/></svg><span class="tab-label">Proyec</span><svg class="i16 tab-close"><use href="#close"/></svg></button>
      <button class="tab"><svg class="i16"><use href="#google"/></svg><span class="tab-label">arquitectu</span></button>
      <button class="tab"><svg class="i16"><use href="#bee"/></svg><span class="tab-label">Arquitectu</span></button>
      <button class="tab"><svg class="i16"><use href="#notebook"/></svg><span class="tab-label">Generado</span></button>
      <button class="tab"><svg class="i16"><use href="#facebook"/></svg><span class="tab-label whole">Facebook</span></button>
      <button class="tab"><svg class="i16"><use href="#translate"/></svg><span class="tab-label whole">Traductor</span></button>
      <button class="tab"><svg class="i16"><use href="#wikipedia"/></svg><span class="tab-label">Chichén It</span></button>
      <button class="tab"><svg class="i16"><use href="#outlook"/></svg><span class="tab-label">Correo: Ca</span></button>
      <button class="tab"><svg class="i16"><use href="#file"/></svg><span class="tab-label">157068.pd</span></button>
      <button class="new-tab" aria-label="Nueva pestaña"><svg class="i20"><use href="#plus"/></svg></button>
      <div class="window-controls">
        <button aria-label="Pestañas"><svg class="i20"><use href="#tab-menu"/></svg></button>
        <button aria-label="Minimizar"><svg class="i20"><use href="#minus"/></svg></button>
        <button aria-label="Restaurar"><svg class="i20"><use href="#restore"/></svg></button>
        <button aria-label="Cerrar"><svg class="i20"><use href="#close"/></svg></button>
      </div>
    </div>

    <div class="address-bar">
      <button class="nav-btn" aria-label="Atrás"><svg class="i18"><use href="#back"/></svg></button>
      <button class="nav-btn disabled" aria-label="Adelante"><svg class="i18"><use href="#forward"/></svg></button>
      <button class="nav-btn" aria-label="Recargar"><svg class="i18"><use href="#reload"/></svg></button>
      <button class="nav-btn" aria-label="Inicio rápido"><svg class="i18"><use href="#tiles"/></svg></button>
      <span class="bar-rule"></span>
      <button class="security"><svg class="i20"><use href="#globe"/></svg><span>Not secure</span></button>
      <div class="url">portafolios.<b>udlap.mx</b>/portafolios/joseluis.zechinelli/LIS-3061/_layouts/15/start.aspx#/EntregaDeTareas/Forms/AllItems.aspx?RootFolder=%2Fportafolios%2Fjoseluis%2Ezechinelli%2FLIS-3061%2FEntregaDeTareas%2</div>
      <div class="bar-tools">
        <button aria-label="Captura"><svg class="i20"><use href="#camera"/></svg></button>
        <button aria-label="Bloqueador"><svg class="i20"><use href="#shield"/></svg></button>
        <button class="blue" aria-label="Enviar"><svg class="i16"><use href="#send"/></svg></button>
        <button aria-label="Favorito"><svg class="i18"><use href="#heart"/></svg></button>
      </div>
      <span class="bar-rule"></span>
      <div class="bar-tools">
        <button aria-label="Diccionario"><svg class="i16"><use href="#book"/></svg></button>
        <button aria-label="Brote"><svg class="i16"><use href="#sprout"/></svg></button>
        <button aria-label="Ola"><svg class="i16"><use href="#wave"/></svg></button>
        <button aria-label="Cubo"><svg class="i16"><use href="#rgb-cube"/></svg></button>
        <button aria-label="Cuaderno"><svg class="i16"><use href="#journal"/></svg></button>
      </div>
      <span class="bar-rule dim"></span>
      <div class="bar-tools wide">
        <button aria-label="Descargas"><svg class="i16"><use href="#download"/></svg><span class="dot light"></span></button>
        <button aria-label="Batería"><svg class="i20"><use href="#battery"/></svg></button>
        <button aria-label="Configuración"><svg class="i20"><use href="#sliders"/></svg></button>
      </div>
    </div>

    <div class="bookmarks">
      <a href="#" aria-label="Google"><svg class="i16"><use href="#google"/></svg></a>
      <a href="#" aria-label="Facebook"><svg class="i16"><use href="#facebook"/></svg></a>
      <a href="#" aria-label="Reddit"><svg class="i16"><use href="#reddit"/></svg></a>
      <a href="#" aria-label="Pinterest"><svg class="i16"><use href="#pinterest"/></svg></a>
      <a href="#" aria-label="Amazon"><svg class="i16"><use href="#amazon"/></svg></a>
      <a href="#" aria-label="YouTube"><svg class="i16"><use href="#youtube"/></svg></a>
      <a href="#" aria-label="YouTube Music"><svg class="i16"><use href="#ytmusic"/></svg></a>
      <a href="#" aria-label="Música"><svg class="i16"><use href="#music-note"/></svg></a>
      <a href="#" aria-label="Netflix"><svg class="i16"><use href="#netflix"/></svg></a>
      <a href="#" aria-label="Video"><svg class="i16"><use href="#play-green"/></svg></a>
      <a href="#" aria-label="Fotos"><svg class="i16"><use href="#photos"/></svg></a>
      <a href="#" aria-label="Gmail"><svg class="i16"><use href="#gmail"/></svg></a>
      <a href="#" aria-label="Microsoft"><svg class="i16"><use href="#microsoft"/></svg></a>
      <a href="#" aria-label="Outlook"><svg class="i16"><use href="#outlook"/></svg></a>
      <a href="#" aria-label="Drive"><svg class="i16"><use href="#drive"/></svg></a>
      <a href="#" aria-label="Espiral"><svg class="i16"><use href="#swirl"/></svg></a>
      <a href="#" aria-label="HackerRank"><svg class="i16"><use href="#hackerrank"/></svg></a>
      <a href="#" aria-label="GitHub"><svg class="i16"><use href="#github"/></svg></a>
      <a href="#" aria-label="GitLab"><svg class="i16"><use href="#gitlab"/></svg></a>
      <a href="#" aria-label="Udemy"><svg class="i16"><use href="#udemy"/></svg></a>
      <a href="#" aria-label="AWS"><svg class="i16"><use href="#aws"/></svg></a>
      <a href="#" aria-label="PayPal"><svg class="i16"><use href="#paypal"/></svg></a>
      <a href="#" aria-label="Bitdegree"><svg class="i16"><use href="#brackets"/></svg></a>
      <a href="#" aria-label="Brain"><svg class="i16"><use href="#blue-brain"/></svg></a>
      <a href="#" aria-label="DeviantArt"><svg class="i16"><use href="#deviant"/></svg></a>
      <a href="#" aria-label="XDA"><svg class="i16"><use href="#xda"/></svg></a>
      <a href="#" aria-label="KDE"><svg class="i16"><use href="#kde"/></svg></a>
      <a href="#" aria-label="Web Store"><svg class="i16"><use href="#webstore"/></svg></a>
      <a href="#" class="bookmark-folder"><svg class="i16"><use href="#folder"/></svg><span>Portafolios</span></a>
    </div>

    <div class="page">
      <header class="suite-bar">
        <button class="waffle" aria-label="Aplicaciones"><svg class="i16"><use href="#waffle"/></svg></button>
        <a href="#" class="brand">Universidad de las Américas Puebla</a>
        <a href="#" class="brand sites">Sitios</a>
        <button class="suite-btn" aria-label="Configuración"><svg class="i16"><use href="#cog"/></svg></button>
        <button class="suite-btn help">?</button>
        <button class="user">Carlos Andres Reyes Evange<span class="caret"></span></button>
      </header>

      <div class="ribbon">
        <a href="#" class="ribbon-tab">NAVEGAR</a>
        <div class="ribbon-context">
          <a href="#">ARCHIVOS</a>
          <a href="#">BIBLIOTECA</a>
        </div>
        <div class="ribbon-actions">
          <button><svg class="i14"><use href="#share"/></svg>COMPARTIR</button>
          <button><svg class="i16"><use href="#star"/></svg>SEGUIR</button>
          <button class="focus-btn" aria-label="Enfocar"><svg class="i16"><use href="#focus"/></svg></button>
        </div>
      </div>

      <div class="site-head">
        <a href="#" class="logo" aria-label="Portafolios Electrónicos UDLAP">
          <svg viewBox="0 0 123 64" width="123" height="64">
            <path fill="#b35400" d="M0 0l15 6v54L4 64V22l-4-2z"/>
            <path fill="#ff8000" d="m15 2 34 16v32L15 63z"/>
            <path fill="#b35400" d="M50 17h73v22H50z"/>
            <path fill="#ff8000" d="M50 40h73v10H50z"/>
            <path stroke="#ffc080" d="M49.500 17v33M50 39.500h73"/>
            <g class="glyph-bold" fill="#fff"><text x="51" y="28" font-size="10">PORTAFOLIOS</text><text x="52" y="36" font-size="6">ELECTRÓNICOS</text><text x="52" y="48" font-size="7">UDLAP</text></g>
          </svg>
        </a>
        <div class="head-text">
          <nav class="top-nav">
            <a href="#">Inicio</a>
            <a href="#" class="current">LIS-3061</a>
            <a href="#">LIS-3071</a>
            <a href="#">LIS-3101</a>
          </nav>
          <h1>Entrega de Tareas <span class="crumb-arrow"></span> Proyecto Final (20.05.2019)</h1>
        </div>
        <form class="search site-search">
          <input type="text" aria-label="Buscar este sitio" placeholder="Buscar este sitio">
          <button type="button" aria-label="Buscar"><svg class="i14"><use href="#magnifier"/></svg></button>
        </form>
      </div>

      <div class="site-body">
        <nav class="quick-launch">
          <a href="#">Inicio</a>
          <a href="#">Syllabus</a>
          <a href="#">Presentaciones</a>
          <a href="#">Laboratorio</a>
          <a href="#">Lecturas</a>
          <a href="#">Recursos de Internet</a>
          <a href="#">Tareas del curso</a>
          <a href="#" class="selected">Entrega de Tareas</a>
          <a href="#">Papelera de reciclaje</a>
        </nav>
        <main class="library">
          <div class="commands">
            <button class="cmd-new"><svg class="i22"><use href="#add-circle"/></svg>Nuevo</button>
            <button class="cmd-upload"><svg class="i18"><use href="#upload"/></svg>Cargar</button>
            <button class="cmd-sync"><svg class="i18"><use href="#sync"/></svg>Sincronizar</button>
            <button class="cmd-share"><svg class="i18"><use href="#share"/></svg>Compartir</button>
            <button class="cmd-more">Más<svg class="i12"><use href="#chevron"/></svg></button>
          </div>
          <div class="views">
            <a href="#" class="view-current">Todos los documentos</a>
            <a href="#" class="view-mine">Mis envíos</a>
            <form class="search file-search">
              <input type="text" aria-label="Buscar un archivo" placeholder="Buscar un archivo">
              <button type="button" aria-label="Buscar"><svg class="i14"><use href="#magnifier"/></svg></button>
            </form>
          </div>
          <table class="files">
            <thead>
              <tr>
                <th class="c-check"><svg class="i10"><use href="#check"/></svg></th>
                <th class="c-type"><svg class="i16"><use href="#page"/></svg></th>
                <th class="c-name">Nombre</th>
                <th class="c-date">Modificado</th>
                <th class="c-author">Modificado por</th>
                <th class="c-state">Estado de aprobación</th>
              </tr>
            </thead>
            <tbody>
              <tr>
                <td></td>
                <td><svg class="i16"><use href="#pdf"/></svg></td>
                <td><div class="file-name"><a href="#">157068</a><svg class="i10"><use href="#new-item"/></svg><button aria-label="Abrir menú"><i></i><i></i><i></i></button></div></td>
                <td>Hace unos segundos</td>
                <td><label class="author"><input type="checkbox">Carlos Andres Reyes Evangelista</label></td>
                <td>En espera</td>
              </tr>
            </tbody>
          </table>
          <p class="drop-hint">Arrastre archivos aquí para cargar</p>
        </main>
      </div>
    </div>
  </div>
</div>

<footer class="taskbar">
  <button aria-label="Inicio"><svg class="i16"><use href="#windows"/></svg></button>
  <button aria-label="Buscar"><svg class="i16"><use href="#task-search"/></svg></button>
  <button aria-label="Vista de tareas"><svg class="i16"><use href="#task-view"/></svg></button>
  <div class="apps">
    <button class="app" aria-label="Groove"><svg class="i24"><use href="#groove"/></svg></button>
    <button class="app focused" aria-label="Opera"><svg class="i24"><use href="#opera"/></svg></button>
    <button class="app" aria-label="Sonido"><svg class="i22"><use href="#speaker"/></svg></button>
    <button class="app" aria-label="Explorador"><svg class="i22"><use href="#explorer"/></svg></button>
    <button class="app" aria-label="Panel"><svg class="i22"><use href="#control-panel"/></svg></button>
    <button class="app" aria-label="Cereza"><svg class="i22"><use href="#cherry"/></svg></button>
    <button class="app" aria-label="Word"><svg class="i22"><use href="#word"/></svg></button>
  </div>
  <div class="tray">
    <button aria-label="Iconos ocultos"><svg class="i16"><use href="#tray-up"/></svg></button>
    <button aria-label="OneDrive sincronizando"><svg class="i16"><use href="#onedrive-sync"/></svg></button>
    <button aria-label="OneDrive"><svg class="i16"><use href="#onedrive"/></svg></button>
    <button aria-label="Batería"><svg class="i16"><use href="#tray-battery"/></svg></button>
    <button aria-label="Red"><svg class="i16"><use href="#wifi"/></svg></button>
    <button aria-label="Volumen"><svg class="i16"><use href="#volume"/></svg></button>
    <button class="lang">ESP</button>
    <button class="clock"><span>14:53</span><span>20-May-19</span></button>
    <button class="notify" aria-label="Notificaciones"><svg class="i18"><use href="#action-center"/></svg></button>
    <span class="show-desktop"></span>
  </div>
</footer>
</body>
</html>
```
FILE: styles.css
```css
* { box-sizing: border-box; }

body {
  margin: 0;
  min-height: 100vh;
  display: flex;
  flex-direction: column;
  background: #fff;
  color: #444;
  font: 12px/16px "Open Sans", sans-serif;
}

a { color: inherit; text-decoration: none; }
button { padding: 0; border: 0; background: none; color: inherit; font: inherit; }
svg { display: block; flex: none; }

.gradients { position: absolute; width: 0; height: 0; }
.sprite { display: none; }
.glyph-bold { font-family: "Open Sans", sans-serif; font-weight: 700; }
.line { fill: none; stroke: currentColor; stroke-width: 1.2; }
.i10 { width: 10px; height: 10px; }
.i12 { width: 12px; height: 12px; }
.i14 { width: 14px; height: 14px; }
.i16 { width: 16px; height: 16px; }
.i18 { width: 18px; height: 18px; }
.i20 { width: 20px; height: 20px; }
.i22 { width: 22px; height: 22px; }
.i24 { width: 24px; height: 24px; }

.desktop { flex: 1; display: flex; }

/* Side panel */
.side-panel {
  width: 40px;
  flex: none;
  display: flex;
  flex-direction: column;
  background: #181c21;
  color: #dfe5e8;
}
.side-btn {
  position: relative;
  height: 45px;
  display: flex;
  align-items: center;
  justify-content: center;
  width: 100%;
}
.opera-menu { height: 40px; margin-bottom: 37px; }
.side-rule { height: 16px; padding: 7px 14px 8px; background: #8094a0 content-box; }
.side-more { margin-top: auto; margin-bottom: 18px; }
.dot {
  position: absolute;
  top: 11px;
  right: 8px;
  width: 8px;
  height: 8px;
  border-radius: 50%;
  background: #0a93ff;
}
.dot.light { top: 3px; right: 4px; background: #8fd6ff; }

/* Tabs */
.window { flex: 1; min-width: 0; display: flex; flex-direction: column; }
.tab-bar {
  height: 31px;
  display: flex;
  align-items: center;
  background: #181c21;
  color: #dfe5e8;
  font-size: 11px;
}
.tab {
  height: 30px;
  flex: 0 1 88px;
  min-width: 0;
  display: flex;
  align-items: center;
  gap: 3px;
  padding: 0 4px 0 7px;
  background: linear-gradient(#4a5157, #4a5157) right center / 1px 16px no-repeat;
}
.tab.pinned { flex-basis: 38px; padding: 0 0 0 11px; }
.tab-label {
  flex: 1;
  min-width: 0;
  overflow: hidden;
  white-space: nowrap;
  text-align: left;
  mask-image: linear-gradient(to right, #000 60%, transparent 95%);
}
.tab-label.whole { mask-image: none; }
.tab.active {
  height: 31px;
  margin: 0 2px;
  flex-basis: 84px;
  padding: 0 5px;
  border-radius: 4px 4px 0 0;
  background: #2b343c;
}
.tab-close { color: #fff; }
.new-tab { width: 30px; display: flex; justify-content: center; }
.window-controls { margin-left: auto; display: flex; }
.window-controls button { width: 40px; display: flex; justify-content: center; }

/* Address bar */
.address-bar {
  height: 38px;
  display: flex;
  align-items: center;
  padding: 0 4px 0 3px;
  background: #2b343c;
  color: #e6ebee;
}
.nav-btn { width: 32px; display: flex; justify-content: center; }
.nav-btn.disabled { opacity: .4; }
.bar-rule { width: 1px; height: 18px; margin: 0 6px; background: #c6ccd0; }
.bar-rule.dim { margin: 0 5px; background: #6a737a; }
.security { display: flex; align-items: center; gap: 3px; margin-left: 10px; font-size: 11px; }
.url {
  flex: 1;
  min-width: 0;
  margin: 0 10px 0 14px;
  overflow: hidden;
  white-space: nowrap;
  color: #a9b0b5;
  font-family: "Noto Sans", sans-serif;
  font-size: 12px;
  line-height: 20px;
}
.url b { color: #fff; font-weight: 400; }
.bar-tools { display: flex; }
.bar-tools button { position: relative; width: 31px; height: 32px; display: flex; align-items: center; justify-content: center; }
.bar-tools.wide button { width: 33px; }
.blue { color: #8fd6ff; }

/* Bookmarks */
.bookmarks {
  height: 33px;
  display: flex;
  align-items: center;
  padding: 0 8px 4px;
  border-bottom: 1px solid #14181c;
  background: #2b343c;
  color: #fff;
  font-size: 11px;
}
.bookmarks a { width: 28px; display: flex; justify-content: center; }
.bookmarks .bookmark-folder { width: auto; gap: 8px; padding-left: 6px; }

/* Suite bar */
.page { flex: 1; background: #fff; }
.suite-bar { height: 50px; display: flex; align-items: center; background: #f07508; color: #fff; }
.waffle {
  width: 51px;
  height: 50px;
  display: flex;
  align-items: center;
  justify-content: center;
  border-right: 1px solid #f6a35c;
}
.brand { padding: 0 15px 0 20px; font-size: 21px; line-height: 40px; }
.sites { border-left: 1px solid #f6a35c; margin-right: auto; }
.suite-btn {
  width: 50px;
  height: 50px;
  display: flex;
  align-items: center;
  justify-content: center;
  border-left: 1px solid #f6a35c;
}
.help { font-size: 21px; font-weight: 800; }
.user {
  height: 50px;
  display: flex;
  align-items: center;
  gap: 14px;
  padding: 0 14px 0 20px;
  border-left: 1px solid #f6a35c;
  font-family: "Noto Sans", sans-serif;
  font-size: 14px;
}
.caret { border: 5px solid transparent; border-top: 6px solid #a8a096; border-bottom: 0; }

/* Ribbon */
.ribbon {
  height: 35px;
  display: flex;
  align-items: stretch;
  border-bottom: 1px solid #e6e6e6;
  background: #f1f1f1;
  font-size: 11px;
  font-weight: 300;
  line-height: 14px;
  color: #000;
}
.ribbon-tab { width: 80px; padding: 15px 0 0 20px; }
.ribbon-context {
  display: flex;
  gap: 20px;
  margin: 5px 0 -1px;
  padding: 6px 6px 0 10px;
  border: 1px solid #4b8be4;
  border-top-width: 4px;
  border-bottom: 0;
}
.ribbon-actions { margin: 8px 13px 0 auto; display: flex; align-items: center; gap: 13px; height: 26px; }
.ribbon-actions button { display: flex; align-items: center; gap: 4px; }
.focus-btn { margin-left: 6px; }

/* Site heading */
.site-head { display: flex; align-items: flex-start; padding: 19px 20px 0; }
.head-text { flex: 1; margin-left: 20px; }
.top-nav {
  display: flex;
  gap: 33px;
  padding: 4px 0 0 1px;
  color: #666;
  font-family: "Noto Sans", sans-serif;
}
.top-nav .current { color: #f07508; font-weight: 500; }
h1 {
  margin: 5px 0 0;
  color: #262626;
  font-size: 33px;
  font-weight: 300;
  line-height: 43px;
}
.crumb-arrow {
  display: inline-block;
  margin: 0 5px 4px 4px;
  border: 4px solid transparent;
  border-left: 5px solid #262626;
  border-right: 0;
}
.search { display: flex; align-items: center; height: 24px; margin: 0; border: 1px solid #ababab; }
.search input {
  flex: 1;
  min-width: 0;
  padding: 0 5px;
  border: 0;
  outline: 0;
  background: none;
  color: #666;
  font: inherit;
  font-size: 11px;
}
.search input::placeholder { color: #777; opacity: 1; }
.search button { padding: 0 5px; color: #555; }
.site-search { width: 229px; }
.file-search { width: 219px; }

/* Body */
.site-body { display: flex; padding-top: 22px; font-family: "Noto Sans", sans-serif; }
.quick-launch { width: 200px; flex: none; display: flex; flex-direction: column; padding-top: 2px; color: #666; }
.quick-launch a { padding: 0 20px; line-height: 27px; }
.quick-launch .selected { background: #f1f1f1; color: #555; font-weight: 500; }
.library { padding-left: 20px; }

.commands { display: flex; align-items: center; height: 34px; }
.commands button { display: flex; align-items: center; height: 33px; gap: 7px; }
.commands svg { color: #f07508; }
.commands .cmd-new { gap: 6px; }
.commands .cmd-upload { width: 95px; margin: 0 12px 0 20px; padding: 1px 0 0 11px; border: 2px solid #9dbdf8; }
.commands .cmd-sync, .commands .cmd-share, .commands .cmd-more { padding-top: 2px; }
.commands .cmd-share { margin-left: 32px; }
.commands .cmd-more { margin-left: 30px; color: #a6a6a6; }
.views { display: flex; align-items: center; height: 34px; color: #666; }
.view-current { width: 152px; color: #f07508; font-weight: 600; font-family: "Open Sans", sans-serif; }
.view-mine { width: 141px; }

.files { border-collapse: collapse; table-layout: fixed; }
.files th, .files td { padding: 0; text-align: left; vertical-align: middle; white-space: nowrap; }
.files th { height: 42px; color: #777; font-family: "Open Sans", sans-serif; font-size: 11px; font-weight: 400; }
.files td { height: 18px; color: #333; }
.c-check { width: 37px; }
.c-check svg { margin-left: 6px; }
.c-type { width: 30px; }
.c-name { width: 122px; }
.c-date { width: 134px; }
.c-author { width: 208px; }
.c-state { width: 120px; }
.file-name { display: flex; align-items: center; gap: 5px; padding: 2px 16px 0 1px; }
.file-name button { display: flex; gap: 2px; margin-left: auto; }
.file-name i { width: 3px; height: 3px; border-radius: 50%; background: #555; }
.author { display: flex; align-items: center; gap: 6px; }
.author input { appearance: none; width: 10px; height: 10px; margin: 0; border: 1px solid #c6c6c6; }
.drop-hint { margin: 26px 0 0; padding-left: 4px; text-align: center; color: #777; font-family: "Open Sans", sans-serif; font-size: 11px; }

/* Taskbar */
.taskbar { height: 40px; flex: none; display: flex; background: #050505; color: #fff; }
.taskbar > button { width: 48px; display: flex; align-items: center; justify-content: center; }
.apps { display: flex; gap: 1px; padding-left: 3px; }
.app {
  width: 48px;
  height: 40px;
  display: flex;
  align-items: center;
  justify-content: center;
  background: linear-gradient(#b4b4ae, #b4b4ae) center bottom / 40px 2px no-repeat;
}
.app.focused { background-color: #3b3b3b; background-size: 48px 2px; }
.tray {
  display: flex;
  align-items: center;
  margin-left: auto;
  padding: 0 4px 0 22px;
  background: linear-gradient(to right, #050505, transparent 10%), linear-gradient(#0a0a0a 20%, #3f3f3f);
}
.tray button { width: 24px; display: flex; justify-content: center; }
.tray .lang { width: 36px; }
.tray .clock { width: 64px; flex-direction: column; align-items: center; line-height: 18px; }
.tray .notify { width: 43px; }
.show-desktop { width: 1px; height: 40px; margin-left: 6px; background: #777; }
```
